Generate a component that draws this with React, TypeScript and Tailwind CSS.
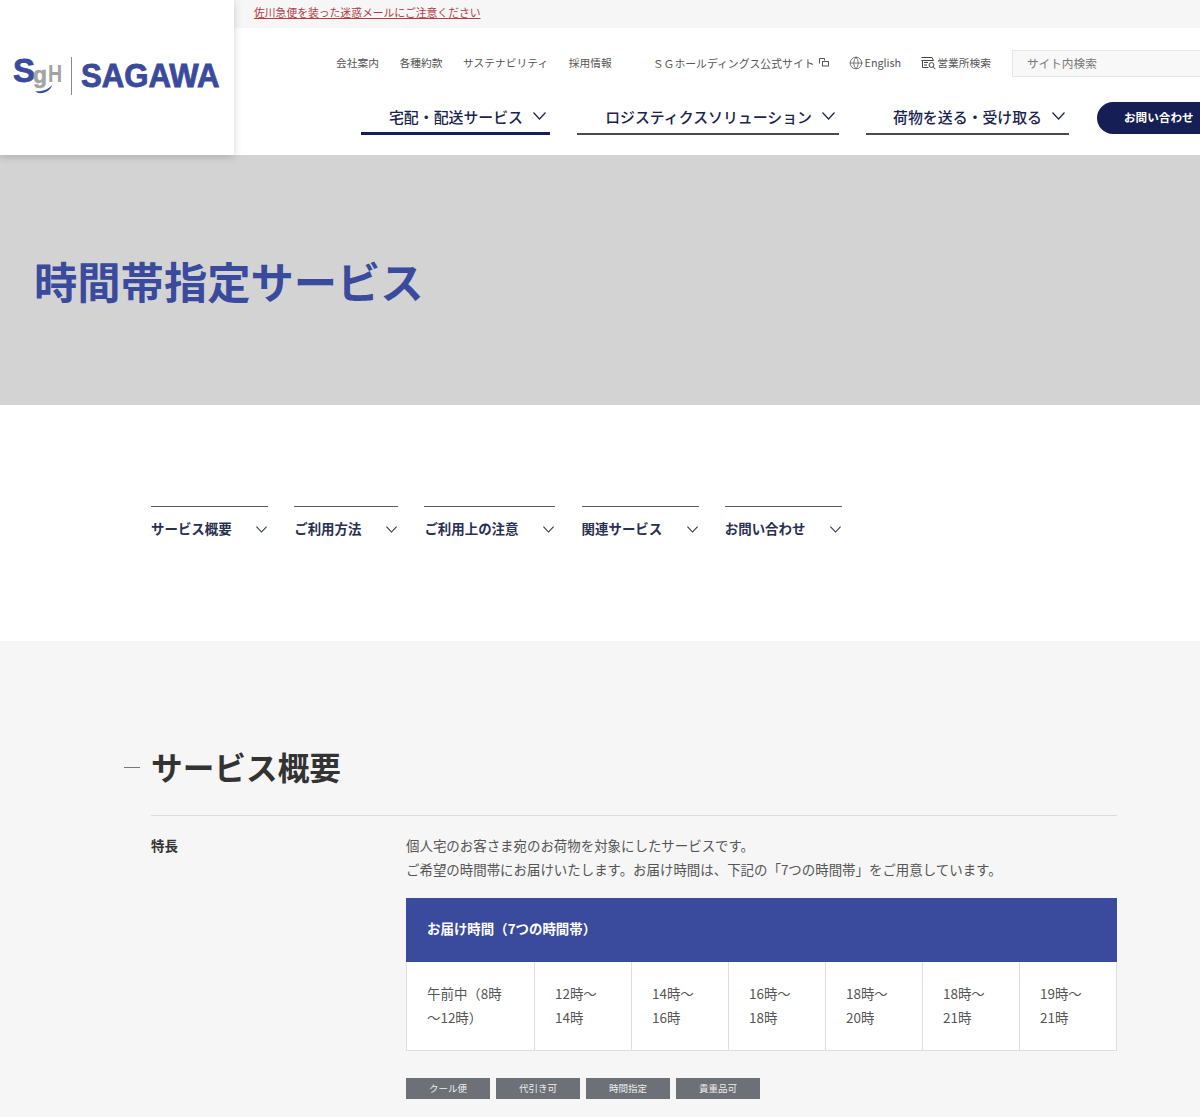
import { Globe } from "lucide-react";

const FONT = "[font-family:'Noto_Sans_CJK_JP','Noto_Sans',sans-serif]";

const UTILITY_LINKS = ["会社案内", "各種約款", "サステナビリティ", "採用情報"];
const MAIN_NAV = [
  { label: "宅配・配送サービス", width: "w-[189px]", active: true },
  { label: "ロジスティクスソリューション", width: "w-[262px]", active: false },
  { label: "荷物を送る・受け取る", width: "w-[203px]", active: false },
];
const ANCHORS = [
  { label: "サービス概要", width: "w-[117px]" },
  { label: "ご利用方法", width: "w-[104px]" },
  { label: "ご利用上の注意", width: "w-[131px]" },
  { label: "関連サービス", width: "w-[117px]" },
  { label: "お問い合わせ", width: "w-[117px]" },
];
const SLOTS = [
  "午前中（8時～12時）",
  "12時～14時",
  "14時～16時",
  "16時～18時",
  "18時～20時",
  "18時～21時",
  "19時～21時",
];
const BADGES = ["クール便", "代引き可", "時間指定", "貴重品可"];

const Logo = () => (
  <svg width="214" height="50" viewBox="0 -6 214 50" className="ml-[12px] mt-[-7px]">
    <text x="1" y="27" fontFamily="Liberation Sans" fontWeight="700" fontSize="33" fill="#3a4a9c" stroke="#3a4a9c" strokeWidth="0.8">
      S
    </text>
    <text x="21" y="28" fontFamily="Liberation Sans" fontWeight="700" fontSize="23" fill="#a3a3a3" stroke="#a3a3a3" strokeWidth="0.5">
      g
    </text>
    <text transform="translate(36 27) scale(0.85 1)" fontFamily="Liberation Sans" fontWeight="700" fontSize="23" fill="#a3a3a3">
      H
    </text>
    <path d="M23 36c6 1 13-1 17-6-1 5-7 9-14 8z" fill="#3a4a9c" />
    <rect x="59" y="2" width="1" height="38" fill="#8a8a8a" />
    <text
      transform="translate(69 32) scale(0.93 1)"
      fontFamily="Liberation Sans"
      fontWeight="700"
      fontSize="33.5"
      fill="#3a4a9c"
      stroke="#3a4a9c"
      strokeWidth="0.9"
    >
      SAGAWA
    </text>
  </svg>
);

const ExternalIcon = () => (
  <svg width="10" height="10" viewBox="0 0 10 10" fill="none" stroke="#555" strokeWidth="1">
    <path d="M.5 5.5v-5h5v2" />
    <rect x="3.5" y="3.5" width="6" height="4.5" />
  </svg>
);

const OfficeIcon = () => (
  <svg width="15" height="14" viewBox="0 0 15 14" fill="none" stroke="#444" strokeWidth="1">
    <path d="M.5 1.5h10.5l1.5 3H.5M1.5 4.5v7h6" />
    <path d="M3 6.5h4M3 9h3" />
    <circle cx="10.5" cy="9" r="2.4" />
    <path d="M12.2 10.8l2.2 2.4" />
  </svg>
);

const Chevron = ({ width, height }: { width: number; height: number }) => (
  <svg width={width} height={height} viewBox="0 0 13 8" fill="none" stroke="currentColor" strokeWidth="1.2" className="shrink-0">
    <path d="M.5.5l6 6.5 6-6.5" />
  </svg>
);

const Header = () => (
  <header className="flex h-[155px] bg-white">
    <div className="relative z-10 flex h-[155px] w-[234px] shrink-0 items-center bg-white shadow-[0_2px_8px_rgba(0,0,0,0.18)]">
      <Logo />
    </div>
    <div className="min-w-0 flex-1">
      <div className="flex h-[28px] items-center bg-[#f6f6f6] pb-[3px] pl-[20px]">
        <a className="text-[10.8px] leading-none text-[#b23b45] underline">佐川急便を装った迷惑メールにご注意ください</a>
      </div>
      <div className="mt-[21px] flex h-[28px] items-center whitespace-nowrap pl-[102px] text-[10.75px] text-[#555]">
        <div className="flex gap-[20.5px]">
          {UTILITY_LINKS.map((link) => (
            <span key={link}>{link}</span>
          ))}
        </div>
        <span className="ml-[20px] mr-[21px] h-[19px] w-px bg-[#ddd]" />
        <span className="flex items-center gap-[4px] text-[10.85px]">
          ＳＧホールディングス公式サイト
          <ExternalIcon />
        </span>
        <span className="ml-[20px] flex items-center gap-[2px]">
          <Globe size={14} strokeWidth={1.3} />
          English
        </span>
        <span className="ml-[20px] flex items-center gap-[1px]">
          <OfficeIcon />
          営業所検索
        </span>
        <div className="ml-[21px] flex h-[27px] w-[200px] shrink-0 items-center border border-[#e6e6e6] bg-[#f8f8f8] pl-[14px] text-[11.67px] text-[#777]">
          サイト内検索
        </div>
      </div>
      <div className="mt-[24px] flex h-[34px] gap-[27px] whitespace-nowrap pl-[127px]">
        {MAIN_NAV.map((item) => (
          <a
            key={item.label}
            className={`flex h-[34px] shrink-0 items-start justify-end gap-[10px] pr-[4px] pt-[5px] text-[14.9px] leading-[22px] font-medium text-[#1a2350] ${item.width} ${
              item.active ? "border-b-[3px] border-[#161f55]" : "border-b-2 border-[#4a4a52]"
            }`}
          >
            <span>{item.label}</span>
            <span className="pt-[6px]">
              <Chevron width={13} height={8} />
            </span>
          </a>
        ))}
        <button className="ml-[1px] mt-px h-[32px] w-[140px] shrink-0 rounded-l-full bg-[#161f55] pl-[27px] text-left text-[11.6px] font-bold text-white">
          お問い合わせ
        </button>
      </div>
    </div>
  </header>
);

const Hero = () => (
  <section className="flex h-[250px] items-center bg-[#d3d3d3] pl-[34px] pt-[2px]">
    <h1 className="text-[43.3px] leading-none font-bold text-[#3a4a9c]">時間帯指定サービス</h1>
  </section>
);

const AnchorNav = () => (
  <nav className="flex h-[236px] gap-[26.2px] bg-white pl-[151px] pt-[101px]">
    {ANCHORS.map((item) => (
      <a key={item.label} className={`flex h-[45px] items-center justify-between border-t border-[#5a5a66] pb-[2px] text-[13.44px] font-bold text-[#2a3050] ${item.width}`}>
        <span>{item.label}</span>
        <span className="pr-px pt-[2px]">
          <Chevron width={11} height={7} />
        </span>
      </a>
    ))}
  </nav>
);

const Overview = () => (
  <section className="h-[476px] bg-[#f6f6f6] pl-[151px] pr-[83px] pt-[106px]">
    <div className="relative flex h-[69px] items-start border-b border-[#dcdcdc]">
      <span className="absolute left-[-27px] top-[20px] h-px w-[16px] bg-[#777]" />
      <h2 className="text-[31.67px] leading-[38px] font-bold text-[#333]">サービス概要</h2>
    </div>
    <div className="mt-[17px] flex">
      <h3 className="w-[255px] shrink-0 text-[13.44px] leading-[24px] font-bold text-[#333]">特長</h3>
      <div className="min-w-0 flex-1">
        <p className="text-[13.44px] leading-[24px] text-[#555]">
          個人宅のお客さま宛のお荷物を対象にしたサービスです。
          <br />
          ご希望の時間帯にお届けいたします。お届け時間は、下記の「7つの時間帯」をご用意しています。
        </p>
        <div className="mt-[17px]">
          <div className="flex h-[64px] items-center bg-[#3a4a9c] pb-[3px] pl-[21px] text-[13.44px] font-bold text-white">
            お届け時間（7つの時間帯）
          </div>
          <div className="grid h-[89px] grid-cols-[127px_repeat(6,1fr)] border border-t-0 border-[#dedede] bg-white">
            {SLOTS.map((slot, i) => (
              <div key={slot} className={`pt-[19px] text-[13.44px] leading-[24px] text-[#555] ${i === 0 ? "pl-[20px] pr-[20px]" : "border-l border-[#dedede] pl-[20px] pr-[30px]"}`}>
                {slot}
              </div>
            ))}
          </div>
        </div>
        <div className="mt-[27px] flex gap-[6px]">
          {BADGES.map((badge) => (
            <span key={badge} className="flex h-[21px] w-[84px] items-center justify-center bg-[#6d7076] text-[9.5px] text-[#eee]">
              {badge}
            </span>
          ))}
        </div>
      </div>
    </div>
  </section>
);

export default function App() {
  return (
    <div className={`h-[1117px] w-[1200px] overflow-hidden bg-white ${FONT}`}>
      <Header />
      <Hero />
      <AnchorNav />
      <Overview />
    </div>
  );
}
